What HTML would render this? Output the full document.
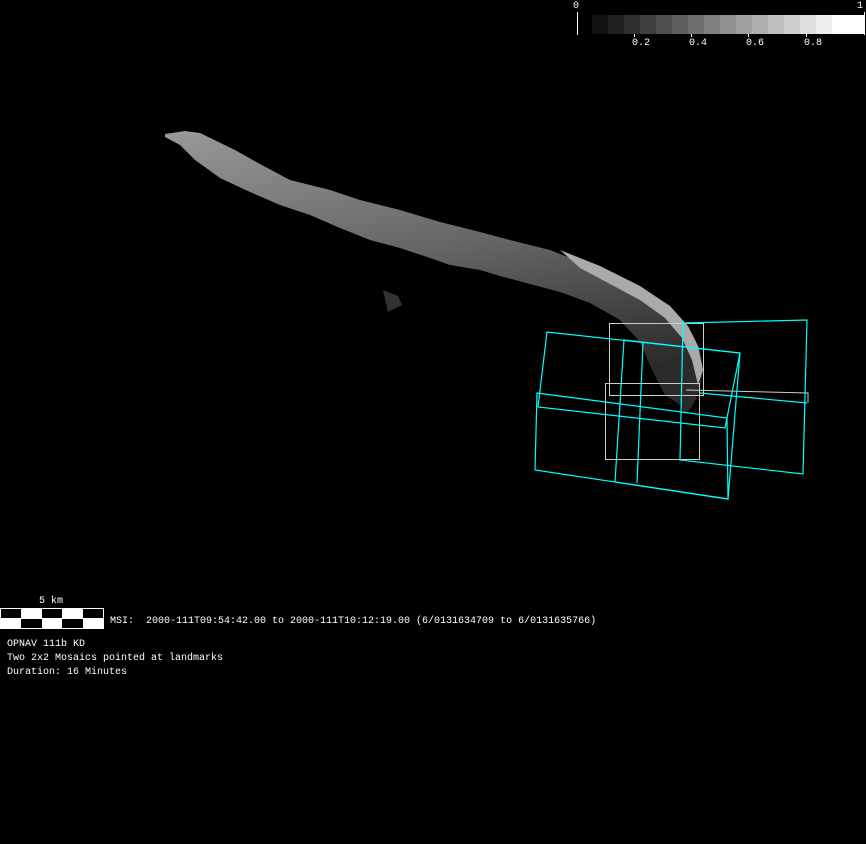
<!DOCTYPE html>
<html><head><meta charset="utf-8"><style>
html,body{margin:0;padding:0;background:#000;width:866px;height:844px;overflow:hidden}
.t{position:absolute;color:#fff;font-family:"Liberation Mono",monospace;font-size:10px;line-height:12px;white-space:pre}
</style></head><body>
<svg width="866" height="844" style="position:absolute;left:0;top:0">
<defs>
<linearGradient id="g" x1="0" y1="0" x2="0.25" y2="1">
<stop offset="0" stop-color="#999"/><stop offset="0.5" stop-color="#666"/><stop offset="1" stop-color="#2a2a2a"/>
</linearGradient>
</defs>
<polygon fill="url(#g)" points="165,134 185,131 200,133 235,150 258,163 290,180 330,190 360,200 400,210 440,222 480,232 510,240 550,250 580,262 620,280 655,300 680,320 693,335 700,350 703,370 700,390 693,405 685,415 680,405 665,395 652,370 640,342 620,320 590,303 560,292 530,284 500,276 480,270 450,265 430,258 400,248 370,240 340,228 310,215 280,205 250,192 220,178 195,160 180,145 165,137"/>
<polygon fill="#aaa" points="560,250 600,266 640,286 670,306 688,326 698,346 703,370 698,385 692,360 682,338 665,318 640,300 610,284 580,268"/>
<polygon fill="#333" points="383,290 398,296 402,305 388,312"/>
<g fill="none" stroke="#ccc" stroke-width="1">
<rect x="609.5" y="323.5" width="94" height="72"/>
<rect x="605.5" y="383.5" width="94" height="76"/>
<polyline points="686,390 808,393 808,403"/>
</g>
<g fill="none" stroke="#0ff" stroke-width="1.2">
<polygon points="547,332 740,353 725,428 538,407"/>
<polygon points="624,340 740,353 728,499 615,482"/>
<polygon points="537,393 727,418 728,499 535,470"/>
<line x1="643" y1="342" x2="637" y2="483"/>
<polygon points="683,323 807,320 803,474 680,460"/>
<line x1="700" y1="393" x2="807" y2="403"/>
</g>
<g>
<rect x="592" y="15" width="16" height="19" fill="#111"/>
<rect x="608" y="15" width="16" height="19" fill="#1f1f1f"/>
<rect x="624" y="15" width="16" height="19" fill="#2f2f2f"/>
<rect x="640" y="15" width="16" height="19" fill="#3f3f3f"/>
<rect x="656" y="15" width="16" height="19" fill="#4f4f4f"/>
<rect x="672" y="15" width="16" height="19" fill="#5f5f5f"/>
<rect x="688" y="15" width="16" height="19" fill="#6f6f6f"/>
<rect x="704" y="15" width="16" height="19" fill="#7f7f7f"/>
<rect x="720" y="15" width="16" height="19" fill="#8f8f8f"/>
<rect x="736" y="15" width="16" height="19" fill="#9f9f9f"/>
<rect x="752" y="15" width="16" height="19" fill="#afafaf"/>
<rect x="768" y="15" width="16" height="19" fill="#bfbfbf"/>
<rect x="784" y="15" width="16" height="19" fill="#cfcfcf"/>
<rect x="800" y="15" width="16" height="19" fill="#dfdfdf"/>
<rect x="816" y="15" width="16" height="19" fill="#efefef"/>
<rect x="832" y="15" width="32" height="19" fill="#fff"/>
<line x1="577.5" y1="12" x2="577.5" y2="35" stroke="#fff"/>
<line x1="864.5" y1="12" x2="864.5" y2="35" stroke="#fff"/>
<line x1="634.5" y1="34" x2="634.5" y2="37" stroke="#fff"/>
<line x1="691.5" y1="34" x2="691.5" y2="37" stroke="#fff"/>
<line x1="748.5" y1="34" x2="748.5" y2="37" stroke="#fff"/>
<line x1="806.5" y1="34" x2="806.5" y2="37" stroke="#fff"/>
</g>
<rect x="0.5" y="608.5" width="103" height="20" fill="#fff" stroke="#fff"/>
<rect x="1" y="609" width="20" height="9" fill="#000"/>
<rect x="42" y="609" width="20" height="9" fill="#000"/>
<rect x="83" y="609" width="20" height="9" fill="#000"/>
<rect x="21" y="619" width="21" height="9" fill="#000"/>
<rect x="62" y="619" width="21" height="9" fill="#000"/>
</svg>
<div class="t" style="left:573px;top:1px">0</div>
<div class="t" style="left:857px;top:1px">1</div>
<div class="t" style="left:632px;top:38px">0.2</div>
<div class="t" style="left:689px;top:38px">0.4</div>
<div class="t" style="left:746px;top:38px">0.6</div>
<div class="t" style="left:804px;top:38px">0.8</div>
<div class="t" style="left:39px;top:596px">5 km</div>
<div class="t" style="left:110px;top:616px">MSI:  2000-111T09:54:42.00 to 2000-111T10:12:19.00 (6/0131634709 to 6/0131635766)</div>
<div class="t" style="left:7px;top:639px">OPNAV 111b KD</div>
<div class="t" style="left:7px;top:653px">Two 2x2 Mosaics pointed at landmarks</div>
<div class="t" style="left:7px;top:667px">Duration: 16 Minutes</div>
</body></html>
